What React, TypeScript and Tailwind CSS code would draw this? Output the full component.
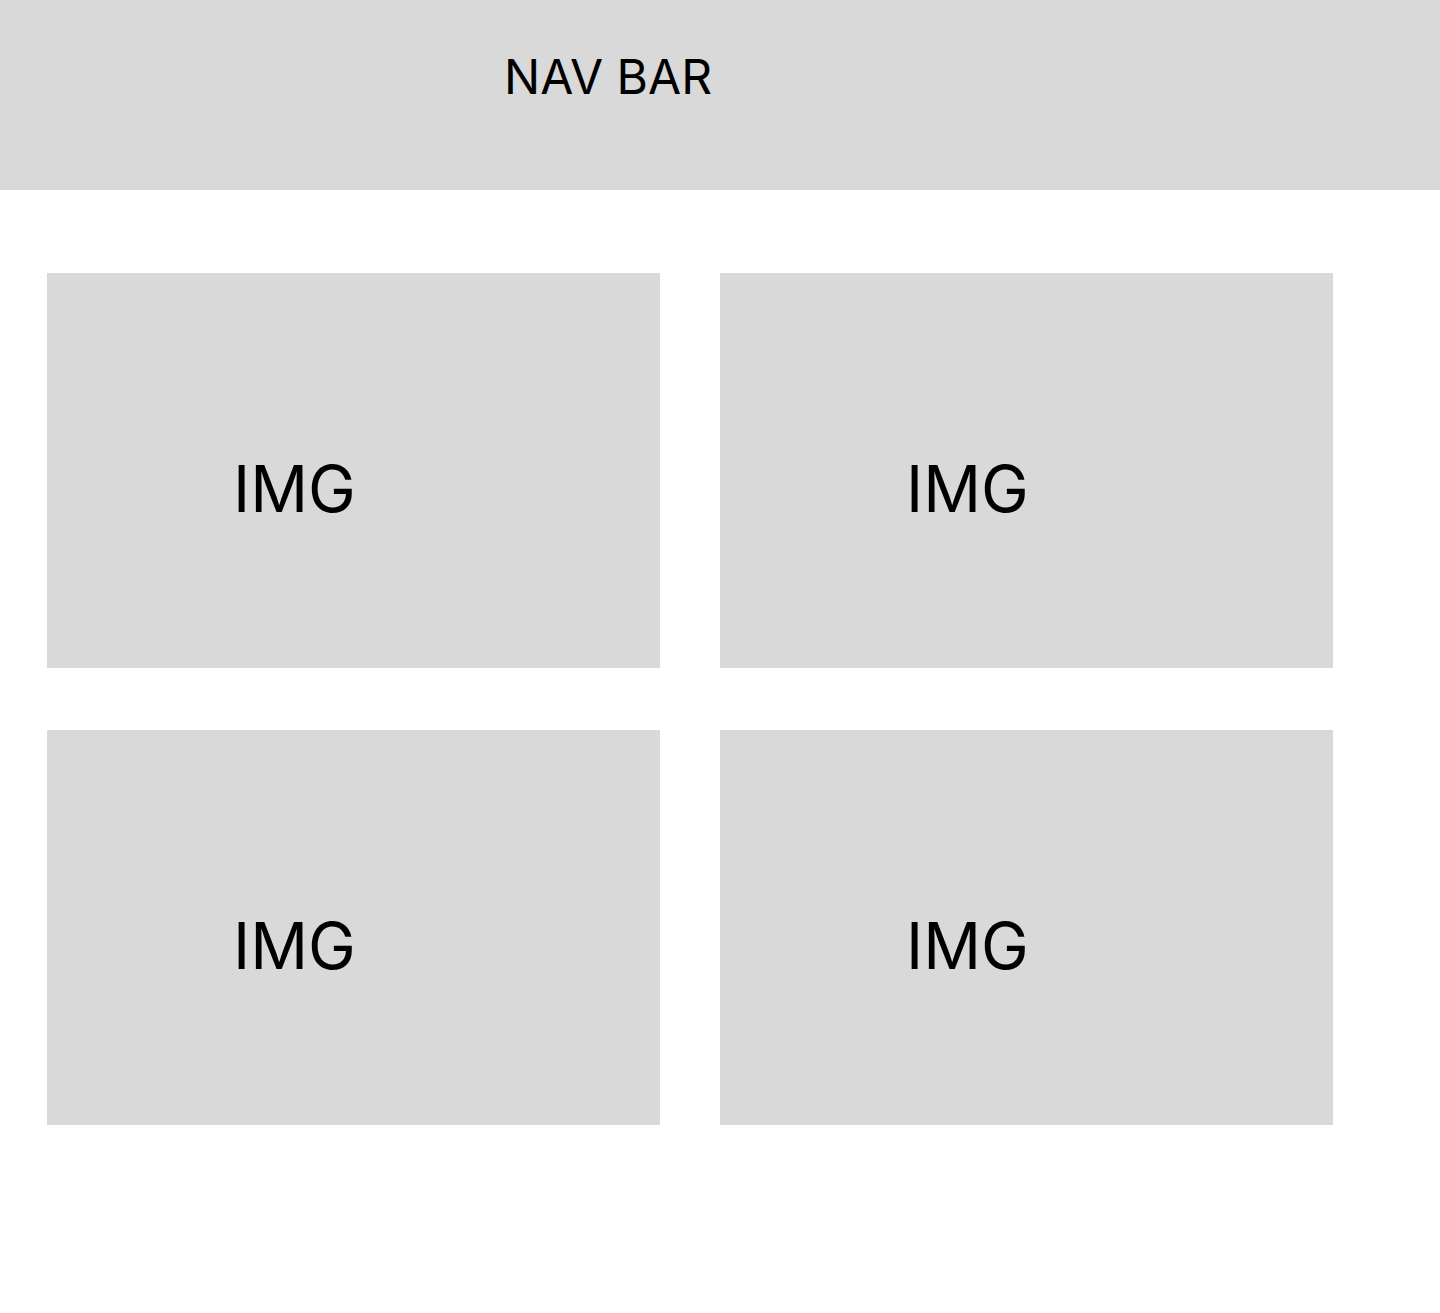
const tiles = ['IMG', 'IMG', 'IMG', 'IMG'];

export default function App() {
  return (
    <div className="min-h-[1313px] bg-white text-black" style={{ fontFamily: 'Inter, "Noto Sans", sans-serif' }}>
      <nav className="h-[190px] bg-[#d9d9d9] pl-[504px] pt-[41px]">
        <span className="text-[48px] font-normal leading-normal">NAV BAR</span>
      </nav>
      <main className="grid grid-cols-[613px_613px] gap-x-[60px] gap-y-[62px] pl-[47px] pt-[83px]">
        {tiles.map((label, i) => (
          <div key={i} className="h-[395px] bg-[#d9d9d9] pl-[186px] pt-[168px]">
            <span className="text-[64px] font-normal leading-normal">{label}</span>
          </div>
        ))}
      </main>
    </div>
  );
}
